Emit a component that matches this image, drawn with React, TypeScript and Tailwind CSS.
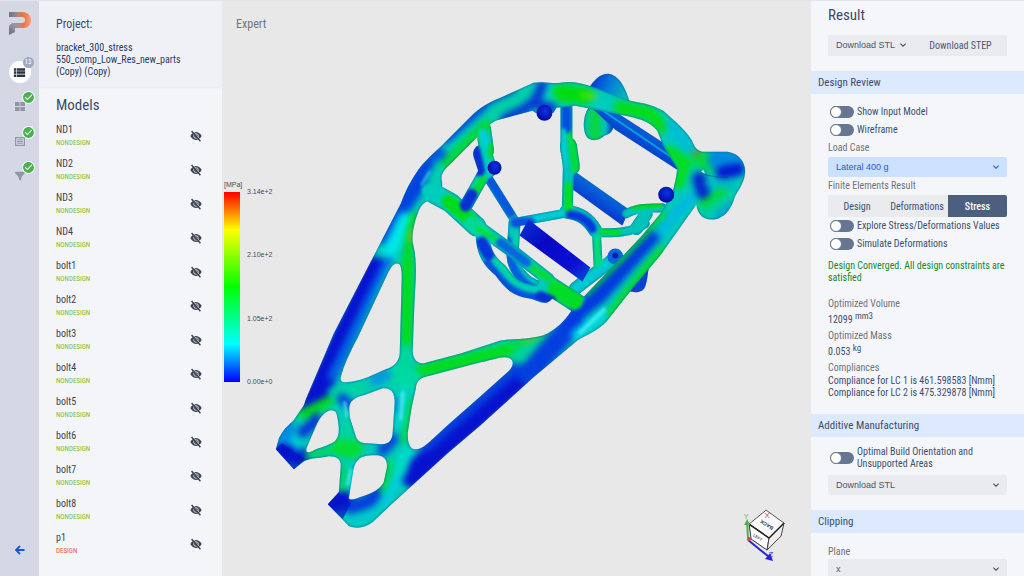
import type { ReactNode } from "react";
import { FaFilter } from "react-icons/fa6";
import { MdCheckCircle, MdKeyboardArrowDown, MdViewList } from "react-icons/md";

type Paint = [color: string, width: number, d: string];

const models = ["ND1", "ND2", "ND3", "ND4", "bolt1", "bolt2", "bolt3", "bolt4", "bolt5", "bolt6", "bolt7", "bolt8", "p1"];

const frameShape =
  "M275 449 L278 438 C282 430 286 426 292 421 L303 405 L305 399 L333 333 L367 267 L400 203 C405 190 410 180 417 170 C424 160 434 152 443 143 L473 113 C482 105 490 101 500 97 L533 82 C542 80 552 83 560 82 C570 80 580 82 592 86 L630 100 C640 102 650 103 663 110 C672 118 683 127 690 137 C694 143 694 149 702 151 L725 151 C738 151 746 162 745 172 C744 184 737 190 734 198 C731 208 724 219 711 219 C702 218 698 214 696 204 L660 255 L633 287 L607 320 C597 331 588 333 577 340 L533 377 L480 425 L447 453 L393 502 L372 522 C364 528 356 529 348 526 L327 504 L338 492 L340 465 C340 459 336 456 328 456 C318 458 309 458 303 461 L293 469 Z " +
  "M573 307 C567 317 560 326 547 333 C535 339 515 338 500 340 L460 353 L423 363 C416 363 412 358 412 350 L414 297 C415 280 417 260 412 242 C411 233 414 220 417 213 C420 205 423 200 433 199 C440 197 443 188 441 179 C440 172 445 168 450 163 L475 138 C485 128 488 124 495 120 L513 115 L532 110 L535 112 L553 112 L556 107 L575 105 L600 110 L630 116 C641 119 650 121 657 130 L663 145 L677 168 C676 178 674 185 672 192 L660 213 L640 237 Z " +
  "M340 377 C342 367 350 350 357 337 L387 273 C391 264 395 261 399 264 C401 268 401 272 401 278 L399 353 C398 362 393 366 385 369 L367 377 C357 381 348 382 343 382 Q339 381 340 377 Z " +
  "M352 400 C348 403 348 407 349 417 L355 436 C357 442 361 443 367 443 L381 444 C389 444 392 439 392 431 L394 402 C394 392 390 387 382 388 L363 395 Q356 396 352 400 Z " +
  "M330 410 C336 410 336 414 337 420 C339 431 338 437 334 441 C327 446 319 447 313 450 C307 454 304 452 306 447 L315 426 C319 417 324 411 330 410 Z " +
  "M357 460 C361 455 370 455 377 455 C385 456 387 462 386 468 L383 482 C379 489 372 493 362 496 C356 498 350 501 348 498 L352 473 Q353 464 357 460 Z " +
  "M427 376 C418 378 416 381 415 389 L411 407 L407 433 C407 443 409 449 415 449 C422 449 427 443 434 437 L447 425 L480 396 L508 371 C514 365 514 358 506 357 C500 356 490 360 480 362 Z";

const innerTubes: Paint[] = [
  ["#fff", 20, "M428 190 L450 202 L476 226"],
  ["#fff", 13, "M470 220 L490 235 L515 253 L548 279"],
  ["#fff", 19, "M546 283 L580 305"],
  ["#fff", 14, "M482 232 C482 253 490 262 500 270 C510 284 516 289 530 291 C542 293 544 301 549 289"],
  ["#fff", 15, "M483 128 L486 150"],
  ["#fff", 19, "M482 153 L487 168"],
  ["#fff", 13, "M484 172 L475 188 L466 204"],
];

const backTubes: Paint[] = [
  ["#fff", 9, "M488 178 L515 221"],
  ["#fff", 9, "M513 222 L568 212"],
  ["#fff", 12, "M514 222 L512 255 C513 272 528 286 546 288"],
  ["#fff", 12, "M566 100 L566 150"],
  ["#fff", 17, "M568 145 L571 166"],
  ["#fff", 11, "M568 165 L567 205"],
  ["#fff", 14, "M566 211 C580 213 588 218 595 230"],
  ["#fff", 9, "M596 230 L598 270"],
  ["#fff", 9, "M594 232 C610 232 628 234 645 223"],
  ["#fff", 9, "M626 213 C636 207 645 208 662 207"],
  ["#fff", 13, "M646 213 L636 228"],
  ["#fff", 13, "M575 288 L614 258"],
];

const backPaint: Paint[] = [
  ["#0657e0", 10, "M490 180 L510 212"],
  ["#00cdd6", 6, "M520 220 L560 212"],
  ["#0a4fdf", 10, "M515 222 L530 222"],
  ["#005de2", 8, "M507 240 C508 272 526 290 548 292"],
  ["#00d7a6", 4, "M516 232 L517 255"],
  ["#0050dd", 10, "M566 108 L566 128"],
  ["#00dc40", 10, "M572 135 L576 168"],
  ["#00cfc8", 5, "M563 130 L564 165"],
  ["#00e020", 8, "M568 185 L568 207"],
  ["#0037dc", 9, "M570 214 Q586 216 592 228"],
  ["#00dc78", 8, "M597 240 L598 268"],
  ["#00dd20", 6, "M602 231 L618 232"],
  ["#00e010", 5, "M632 206 L660 204"],
  ["#00c8de", 6, "M575 288 L606 264"],
];

const framePaint: Paint[] = [
  // left leg
  ["#0712cf", 24, "M310 405 L340 342 L374 268"],
  ["#0068e6", 8, "M331 376 L388 258"],
  ["#0055e0", 20, "M384 234 L412 184 L436 155"],
  ["#00e7e6", 14, "M389 250 L405 218"],
  ["#0043df", 16, "M404 204 L428 168"],
  ["#00d91a", 9, "M407 262 L409 235 L414 216"],
  ["#ffa800", 3, "M411 240 L412 230"],
  ["#00cfb0", 10, "M431 180 L439 164"],
  // upper arc
  ["#00d838", 13, "M447 163 L486 125"],
  ["#0642de", 8, "M445 139 L488 101 L512 90"],
  ["#00cfa8", 16, "M494 110 L526 95"],
  ["#0838d4", 10, "M505 118 L525 108 L536 98 L542 84"],
  ["#0838d4", 10, "M538 104 L552 107"],
  ["#00d9c5", 6, "M549 90 L555 99"],
  ["#00dc10", 18, "M561 92 L585 95"],
  ["#7fe000", 4, "M582 94 L595 96"],
  ["#00ccc0", 10, "M594 103 L621 107"],
  ["#04dc18", 14, "M620 107 L649 112 L661 126"],
  ["#00bcd4", 11, "M670 124 L688 146"],
  ["#00c9c4", 9, "M667 136 L676 147"],
  ["#04dd20", 13, "M669 151 L685 162 L678 182"],
  // struts
  ["#02dc18", 12, "M407 262 L406 340"],
  ["#00d898", 12, "M405 352 L403 374"],
  ["#02dc1c", 14, "M420 371 L520 347 L545 338"],
  ["#7cc400", 4, "M523 340 L541 337"],
  ["#00d8a2", 20, "M395 375 L411 378"],
  ["#0897e0", 11, "M374 380 L386 374"],
  ["#00d2a4", 12, "M333 392 L365 387"],
  ["#0641dd", 10, "M341 398 L349 405"],
  ["#00dfd0", 6, "M403 388 L399 425"],
  ["#0880de", 5, "M396 398 L398 412"],
  ["#02dc28", 6, "M412 400 L404 440"],
  // feet
  ["#02dc20", 10, "M302 414 L328 401"],
  ["#008be1", 14, "M288 427 L281 446"],
  ["#0a35d8", 11, "M302 432 L315 421"],
  ["#0712cf", 17, "M280 452 L300 456"],
  ["#00cbe8", 5, "M292 438 L297 449"],
  ["#04d838", 5, "M306 455 L330 450"],
  ["#04dc34", 20, "M341 447 L352 448"],
  ["#00d5a0", 12, "M346 425 L347 435"],
  ["#054ada", 12, "M382 450 L392 439"],
  ["#02d838", 6, "M343 468 L341 494"],
  ["#00cfbc", 6, "M349 465 L346 488"],
  ["#0712cf", 18, "M330 503 L344 500"],
  ["#063fdd", 14, "M350 507 L368 501 L376 492"],
  ["#00c8d0", 7, "M352 522 L368 516 L388 500"],
  ["#04dd28", 6, "M389 463 L382 491"],
  ["#00cddc", 10, "M384 500 L392 487 L410 456"],
  // right leg
  ["#0712cf", 27, "M414 475 L447 443 L535 364"],
  ["#00dac8", 13, "M399 472 L405 455"],
  ["#063edc", 12, "M425 446 L500 381 L525 360"],
  ["#00d29c", 18, "M520 355 L552 341"],
  ["#043fe0", 22, "M528 374 L572 323"],
  ["#00d7e4", 10, "M576 334 L602 314"],
  ["#0339df", 16, "M566 322 L600 294 L660 226"],
  ["#04dc30", 8, "M587 290 L625 252 L662 213"],
  ["#04dc24", 9, "M611 314 L640 276 L662 250"],
  ["#00b9df", 12, "M660 230 L690 198"],
  // head
  ["#02d940", 17, "M700 158 L712 163"],
  ["#ff3000", 3, "M695 151 L698 154"],
  ["#008bdc", 23, "M719 159 L734 163"],
  ["#0618d2", 13, "M722 172 L738 169"],
  ["#0628cd", 14, "M699 178 L703 192"],
  ["#00bbc2", 10, "M710 182 L732 184"],
  ["#00cf9a", 11, "M708 209 L729 195"],
  ["#04dc26", 7, "M702 204 L722 191"],
  ["#0799d8", 6, "M717 216 L730 204"],
];

const innerPaint: Paint[] = [
  ["#00cdbc", 14, "M428 190 L442 196"],
  ["#02dc1c", 14, "M448 201 L470 219"],
  ["#02d898", 13, "M470 222 L484 232"],
  ["#02dc3c", 5, "M478 228 L497 240"],
  ["#0667dc", 9, "M500 242 L526 262"],
  ["#04d940", 8, "M533 268 L549 278"],
  ["#02dc28", 18, "M556 289 L574 300"],
  ["#0535d9", 12, "M481 242 L488 254"],
  ["#0552db", 8, "M487 263 C500 279 510 295 535 297"],
  ["#00d6a0", 5, "M496 257 L513 280"],
  ["#092fd2", 11, "M540 296 L550 300"],
  ["#00cddc", 8, "M482 132 L485 144"],
  ["#02dc30", 7, "M491 145 L491 154"],
  ["#092fd2", 11, "M474 149 L479 170"],
  ["#02dc38", 9, "M482 180 L476 190"],
  ["#092fd2", 12, "M471 194 L465 205"],
];

const Strokes = ({ items }: { items: Paint[] }) => (
  <>
    {items.map(([color, width, d]) => (
      <path key={d} d={d} stroke={color} strokeWidth={width} fill="none" strokeLinecap="round" strokeLinejoin="round" />
    ))}
  </>
);

const Ball = ({ x, y, r }: { x: number; y: number; r: number }) => (
  <circle cx={x} cy={y} r={r} fill="url(#ball)" />
);

const StressModel = () => (
  <svg viewBox="222 0 588 576" className="h-full w-full" role="img" aria-label="Stress distribution on the bracket">
    <defs>
      <filter id="soft" filterUnits="userSpaceOnUse" x="222" y="0" width="588" height="576" colorInterpolationFilters="sRGB">
        <feGaussianBlur stdDeviation="3.2" />
      </filter>
      <filter id="softSmall" filterUnits="userSpaceOnUse" x="222" y="0" width="588" height="576" colorInterpolationFilters="sRGB">
        <feGaussianBlur stdDeviation="1.8" />
      </filter>
      <filter id="round" filterUnits="userSpaceOnUse" x="222" y="0" width="588" height="576" colorInterpolationFilters="sRGB">
        <feGaussianBlur in="SourceAlpha" stdDeviation="2.2" result="b" />
        <feComponentTransfer in="b" result="core">
          <feFuncA type="linear" slope="2.2" intercept="-0.95" />
        </feComponentTransfer>
        <feFlood floodColor="#0458a0" floodOpacity="0.5" />
        <feComposite in2="core" operator="out" />
        <feComposite in2="SourceAlpha" operator="in" result="edge" />
        <feMerge>
          <feMergeNode in="SourceGraphic" />
          <feMergeNode in="edge" />
        </feMerge>
      </filter>
      <radialGradient id="ball" cx="0.55" cy="0.4" r="0.6">
        <stop offset="0" stopColor="#0a35e0" />
        <stop offset="1" stopColor="#0508a8" />
      </radialGradient>
      <linearGradient id="knob" x1="0" y1="0" x2="1" y2="0.4">
        <stop offset="0" stopColor="#0620d0" />
        <stop offset="0.5" stopColor="#0674da" />
        <stop offset="1" stopColor="#04bcb8" />
      </linearGradient>
      <linearGradient id="lobe" x1="0" y1="0" x2="1" y2="0">
        <stop offset="0" stopColor="#00c4a8" />
        <stop offset="0.4" stopColor="#08d838" />
        <stop offset="0.7" stopColor="#00c0c0" />
        <stop offset="1" stopColor="#0628d0" />
      </linearGradient>
      <linearGradient id="beam" x1="0" y1="1" x2="0.6" y2="0.2">
        <stop offset="0.4" stopColor="#0620d0" />
        <stop offset="1" stopColor="#0780dc" />
      </linearGradient>
      <linearGradient id="darkBeam" x1="0" y1="0" x2="1" y2="1">
        <stop offset="0" stopColor="#0a38d0" />
        <stop offset="0.35" stopColor="#0808c4" />
        <stop offset="0.75" stopColor="#0a10d4" />
        <stop offset="1" stopColor="#0850d4" />
      </linearGradient>
      <mask id="backMask" maskUnits="userSpaceOnUse" x="222" y="0" width="588" height="576">
        <Strokes items={backTubes} />
      </mask>
      <mask id="frameMask" maskUnits="userSpaceOnUse" x="222" y="0" width="588" height="576">
        <path d={frameShape} fill="#fff" fillRule="evenodd" />
        <Strokes items={innerTubes} />
      </mask>
    </defs>

    {/* knobs and lobes behind the ring */}
    <g filter="url(#round)">
      <path d="M588 88 C594 79 600 73 608 73 C617 74 625 84 630 104 L600 108 Z" fill="url(#knob)" />
      <path d="M588 107 C582 116 582 131 587 137 C593 142 601 138 604 135 C612 133 614 127 614 119 L600 104 Z" fill="url(#lobe)" />
      <path d="M650 262 C647 270 648 280 644 288 C639 294 632 291 625 290 L622 280 Z" fill="#0640d8" />
    </g>
    <g filter="url(#round)">
      <path d="M592 96 L663 142 L680 158 L677 169 L615 129 L589 105 Z" fill="url(#beam)" />
      <path d="M600 108 L672 157" stroke="#06a0d8" strokeWidth="2" />
      <path d="M572 169 L629 209 L622 225 L563 182 Z" fill="url(#beam)" />
    </g>
    <g filter="url(#round)">
      <g mask="url(#backMask)">
        <path d="M460 60 H700 V310 H460 Z" fill="#00c4ba" />
        <g filter="url(#softSmall)">
          <Strokes items={backPaint} />
        </g>
      </g>
    </g>
    <path d="M528 219 L590 267 L582 281 L519 235 Z" fill="url(#darkBeam)" />
    <circle cx="615" cy="256" r="8" fill="#0668d8" />
    <circle cx="615" cy="255" r="3" fill="#061cae" />

    {/* load carrying frame */}
    <g filter="url(#round)">
      <g mask="url(#frameMask)">
        <path d="M260 60 H760 V540 H260 Z" fill="#00cbb8" />
        <g filter="url(#soft)">
          <Strokes items={framePaint} />
        </g>
        <g filter="url(#softSmall)">
          <Strokes items={innerPaint} />
        </g>
      </g>
    </g>
    <path d="M703 169 L705 173 L701 171 Z" fill="#e8e8e8" />
    <path d="M704 174 C712 175 719 178 728 176" stroke="#0640a0" fill="none" opacity="0.6" />
    <path d="M275 449 L281 443 L304 459 L293 469 Z" fill="#0712c8" opacity="0.7" />
    <path d="M338 492 L350 503 L342 519 L327 504 Z" fill="#0712c8" opacity="0.7" />
    <g stroke="#4df2f0" strokeLinecap="round" fill="none" filter="url(#softSmall)" opacity="0.8">
      <path d="M580 332 L604 309" strokeWidth="4" />
      <path d="M402 393 L400 418" strokeWidth="4" />
      <path d="M344 402 L346 416" strokeWidth="3" />
      <path d="M421 184 L429 171" strokeWidth="2" />
      <path d="M350 470 L347 484" strokeWidth="3" />
    </g>
    <Ball x={544} y={112} r={8} />
    <Ball x={494} y={167} r={7} />
    <Ball x={666} y={194} r={8} />

    {/* orientation cube */}
    <g strokeLinejoin="round">
      <path d="M749 524 L766 510 L784 523 L769 538 Z" fill="#fafafa" stroke="#555" strokeWidth="1" />
      <path d="M749 524 L769 538 L767 550 L751 539 Z" fill="#fff" stroke="#333" strokeWidth="1" />
      <path d="M784 523 L769 538 L767 550 L781 536 Z" fill="#eee" stroke="#444" strokeWidth="1" />
      <path d="M769 538 L784 523 M749 524 L769 538" stroke="#222" strokeWidth="1.5" />
      <path d="M748 540 L747 522" stroke="#4fae50" strokeWidth="2" />
      <path d="M744 525 L747 519 L750 525 Z" fill="#4fae50" />
      <path d="M748 540 L769 557" stroke="#2424d8" strokeWidth="2" />
      <path d="M773 561 L765 559 L770 553 Z" fill="#2424d8" />
      <circle cx="749" cy="539" r="2" fill="#d84848" />
      <g fontFamily="Liberation Sans, Arial, sans-serif" textAnchor="middle">
        <text x="746" y="519" fontSize="7" fill="#5fb560">Y</text>
        <text x="767" y="518" fontSize="8" fill="#e04040">X</text>
        <text x="771" y="557" fontSize="8" fill="#3030e0">Z</text>
        <text x="767" y="525" fontSize="5" fontWeight="700" fill="#333" transform="rotate(213 767 524)">BACK</text>
        <text x="758" y="539" fontSize="4" fontWeight="700" fill="#555" transform="rotate(33 758 537)">LEFT</text>
      </g>
    </g>
  </svg>
);

const Logo = () => (
  <svg viewBox="0 0 24 24" className="size-6" aria-hidden="true">
    <defs>
      <linearGradient id="logoBand" x1="0" y1="0" x2="1" y2="0">
        <stop offset="0" stopColor="#6c7486" />
        <stop offset="0.4" stopColor="#a98a84" />
        <stop offset="0.65" stopColor="#f0703c" />
        <stop offset="1" stopColor="#f4a07c" />
      </linearGradient>
      <linearGradient id="logoStem" x1="1" y1="0" x2="0" y2="1">
        <stop offset="0" stopColor="#ee7a4c" />
        <stop offset="0.4" stopColor="#9498a6" />
        <stop offset="1" stopColor="#666e80" />
      </linearGradient>
    </defs>
    <path d="M1 1 H14 C20 1 23 5 23 9 C23 14 20 17 15 17 H13 L10 12 H14 C16 12 17 11 17 9 C17 7 16 6 14 6 H1 Z" fill="url(#logoBand)" />
    <path d="M15 17 H7 V21 L1 24 V17 C1 14 3 12 6 12 H13 Z" fill="url(#logoStem)" />
  </svg>
);

const HiddenIcon = () => (
  <svg viewBox="0 0 12 12" className="size-3" aria-hidden="true">
    <path d="M0.3 6 C1.8 3.2 4 2 6 2 C8 2 10.2 3.2 11.7 6 C10.2 8.8 8 10 6 10 C4 10 1.8 8.8 0.3 6 Z" fill="#3f4653" />
    <circle cx="6" cy="6" r="2.3" fill="none" stroke="#f3f5f8" strokeWidth="0.7" />
    <path d="M3 1.2 L10.6 10" stroke="#f3f5f8" strokeWidth="0.7" />
    <path d="M1.6 1 L10.4 11.2" stroke="#3f4653" strokeWidth="1.5" />
  </svg>
);

const GridIcon = () => (
  <svg viewBox="0 0 10 9" className="h-[9px] w-[10px]" fill="currentColor" aria-hidden="true">
    <path d="M0 0 H4.6 V4 H0 Z M5.4 0 H10 V4 H5.4 Z M0 5 H4.6 V9 H0 Z M5.4 5 H10 V9 H5.4 Z" />
  </svg>
);

const ListIcon = () => (
  <svg viewBox="0 0 10 9" className="h-[9px] w-[10px]" fill="none" stroke="currentColor" aria-hidden="true">
    <rect x="0.6" y="0.6" width="8.8" height="7.8" strokeWidth="1.2" />
    <path d="M2.2 2.8 H7.8 M2.2 4.5 H7.8 M2.2 6.2 H7.8" />
  </svg>
);

const navItems = [
  { label: "Design spaces", icon: <GridIcon /> },
  { label: "Load cases", icon: <ListIcon /> },
  { label: "Criteria", icon: <FaFilter className="size-[10px]" /> },
];

const Sidebar = () => (
  <nav className="flex w-[39px] shrink-0 flex-col items-center bg-[#d4d8e4] pt-[10px] pb-[21px]">
    <Logo />
    <button type="button" aria-label="Models" className="relative mt-[26px] flex size-[22px] items-center justify-center rounded-full bg-white text-[#2d3340]">
      <MdViewList className="size-[15px]" />
      <span className="absolute -top-1 left-[14px] flex size-[11px] items-center justify-center rounded-full bg-[#a0a9bf] text-[7px] text-white">13</span>
    </button>
    <div className="mt-2 flex flex-col gap-[15px]">
      {navItems.map(({ label, icon }) => (
        <button key={label} type="button" aria-label={label} className="relative flex h-5 w-5 items-end justify-center text-[#8f96a5]">
          {icon}
          <MdCheckCircle className="absolute top-0 left-3 size-[13px] rounded-full bg-white text-[#4caf50]" />
        </button>
      ))}
    </div>
    <button type="button" aria-label="Back" className="mt-auto text-[#1a56db]">
      <svg viewBox="0 0 10 10" className="size-[10px]" fill="none" stroke="currentColor" strokeWidth="1.8">
        <path d="M9.5 5 H1.5 M5 1 L1 5 L5 9" />
      </svg>
    </button>
  </nav>
);

const ModelsPanel = () => (
  <aside className="w-[183px] shrink-0 overflow-hidden bg-[#f3f5f8]">
    <header className="rounded-b bg-[#eff1f7] px-[17px] pt-[15px] pb-[9px] shadow-xs">
      <h2 className="text-[12px] leading-4 text-[#3c4a6b]">Project:</h2>
      <p className="mt-[10px] text-[10px] leading-3 break-words text-[#2c3b62]">
        bracket_300_stress
        <br />
        550_comp_Low_Res_new_parts
        <br />
        (Copy) (Copy)
      </p>
    </header>
    <h2 className="mt-2 px-[17px] text-[15px] leading-5 text-[#3c4a66]">Models</h2>
    <ul className="mt-2">
      {models.map((name) => (
        <li key={name} className="flex h-[34px] items-start justify-between pr-5 pl-[17px]">
          <div>
            <div className="text-[10px] leading-[14px] text-[#3b424f]">{name}</div>
            <div className={name === "p1" ? "text-[7px] leading-3 text-[#f4583a]" : "text-[7px] leading-3 text-[#7cbd34]"}>
              {name === "p1" ? "DESIGN" : "NONDESIGN"}
            </div>
          </div>
          <button type="button" aria-label={`Show ${name}`} className="mt-[7px]">
            <HiddenIcon />
          </button>
        </li>
      ))}
    </ul>
  </aside>
);

const Viewer = () => (
  <main className="relative min-w-0 flex-1 bg-[#e8e8e8]">
    <StressModel />
    <h1 className="absolute top-[15px] left-[14px] text-[12px] leading-4 text-[#70747c]">Expert</h1>
    <div className="absolute top-[179px] left-[2px] font-['Liberation_Sans',Arial,sans-serif] text-[7px] leading-[10px] text-[#3f4a68]">
      <div>[MPa]</div>
      <div className="mt-[2px] flex gap-[7px]">
        <div className="h-[190px] w-4 bg-[linear-gradient(to_bottom,#ff0000,#ffff00_20%,#00ff00_50%,#00ffff_80%,#0000ff)]" />
        <div className="-my-[5px] flex flex-col justify-between">
          <span>3.14e+2</span>
          <span>2.10e+2</span>
          <span>1.05e+2</span>
          <span>0.00e+0</span>
        </div>
      </div>
    </div>
  </main>
);

const Section = ({ children }: { children: ReactNode }) => (
  <h2 className="mt-[15px] bg-[#dde9fd] px-[7px] text-[11px] leading-[23px] text-[#3c4d70]">{children}</h2>
);

const Toggle = ({ children }: { children: ReactNode }) => (
  <label className="flex min-h-[18px] items-center gap-[3px] pl-[2px] leading-3 text-[#3d4f72]">
    <input
      type="checkbox"
      className="h-3 w-6 shrink-0 appearance-none rounded-full bg-[#667590] before:block before:size-3 before:rounded-full before:border before:border-[#667590] before:bg-white before:content-['']"
    />
    {children}
  </label>
);

type PickerProps = { label: string; value: string; active?: boolean };

const Picker = ({ label, value, active }: PickerProps) => (
  <div className="relative font-['Liberation_Sans',Arial,sans-serif]">
    <select
      aria-label={label}
      className={
        active
          ? "block h-5 w-full appearance-none rounded-xs bg-[#cce0ff] px-2 pt-px text-[9px] text-[#1d5bd8]"
          : "block h-5 w-full appearance-none rounded-xs bg-[#e9ebef] px-2 pt-px text-[9px] text-[#4b5568]"
      }
    >
      <option>{value}</option>
    </select>
    <MdKeyboardArrowDown className={active ? "pointer-events-none absolute top-1 right-[5px] size-3 text-[#1d5bd8]" : "pointer-events-none absolute top-1 right-[5px] size-3 text-[#3d4a63]"} />
  </div>
);

const ResultPanel = () => (
  <aside className="w-[213px] shrink-0 overflow-hidden bg-[#f4f6f9] text-[10px] text-[#3d4f72]">
    <h2 className="px-[17px] pt-[3px] text-[15px] leading-[22px] text-[#3c4a66]">Result</h2>
    <div className="mx-[17px] mt-[9px] flex h-[21px] bg-[#e9ebef]">
      <div className="w-[86px]">
        <Picker label="Download STL" value="Download STL" />
      </div>
      <button type="button" className="flex-1 text-[#4b5875]">Download STEP</button>
    </div>
    <Section>Design Review</Section>
    <div className="px-[17px] pt-[9px]">
      <Toggle>Show Input Model</Toggle>
      <Toggle>Wireframe</Toggle>
      <div className="leading-[18px] text-[#6f747d]">Load Case</div>
      <Picker label="Load Case" value="Lateral 400 g" active />
      <div className="leading-[18px] text-[#6f747d]">Finite Elements Result</div>
      <div className="flex h-[22px] overflow-hidden rounded-xs bg-[#e9ebef]">
        <button type="button" className="w-[58px]">Design</button>
        <button type="button" className="flex-1">Deformations</button>
        <button type="button" className="w-[59px] bg-[#4d5f7e] font-medium text-white">Stress</button>
      </div>
      <Toggle>Explore Stress/Deformations Values</Toggle>
      <Toggle>Simulate Deformations</Toggle>
      <p className="mt-[7px] leading-3 text-[#128a2c]">Design Converged. All design constraints are satisfied</p>
      <dl className="mt-[13px] leading-[14px]">
        <dt className="text-[#6f747d]">Optimized Volume</dt>
        <dd className="h-[18px] leading-[18px]">12099 <sup className="text-[9px]">mm3</sup></dd>
        <dt className="text-[#6f747d]">Optimized Mass</dt>
        <dd className="h-[18px] leading-[18px]">0.053 <sup className="text-[9px]">kg</sup></dd>
        <dt className="text-[#6f747d]">Compliances</dt>
        <dd className="leading-3">Compliance for LC 1 is 461.598583 [Nmm]</dd>
        <dd className="leading-3">Compliance for LC 2 is 475.329878 [Nmm]</dd>
      </dl>
    </div>
    <Section>Additive Manufacturing</Section>
    <div className="px-[17px] pt-[9px]">
      <Toggle>Optimal Build Orientation and Unsupported Areas</Toggle>
      <div className="mt-[5px]">
        <Picker label="Download build STL" value="Download STL" />
      </div>
    </div>
    <Section>Clipping</Section>
    <div className="px-[17px] pt-3">
      <div className="leading-[14px] text-[#6f747d]">Plane</div>
      <Picker label="Plane" value="x" />
    </div>
  </aside>
);

export default function App() {
  return (
    <div className="flex h-screen overflow-hidden border-t border-[#dfe3ea] font-['Roboto_Condensed','Liberation_Sans_Narrow',Roboto,sans-serif]">
      <Sidebar />
      <ModelsPanel />
      <Viewer />
      <ResultPanel />
    </div>
  );
}
